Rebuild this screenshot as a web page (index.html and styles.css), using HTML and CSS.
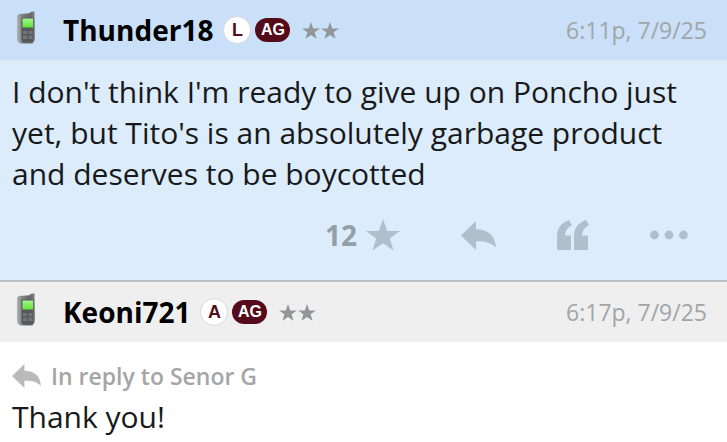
FILE: index.html
```html
<!DOCTYPE html>
<html lang="en">
<head>
<meta charset="utf-8">
<meta name="viewport" content="width=device-width, initial-scale=1">
<title>Forum thread</title>
<link rel="stylesheet" href="styles.css">
</head>
<body>
<svg class="defs" aria-hidden="true">
  <defs>
    <linearGradient id="shell" x1="0" x2="1" y1="0" y2="0">
      <stop offset="0" stop-color="#b0b4b6"/>
      <stop offset=".3" stop-color="#7e8283"/>
      <stop offset=".7" stop-color="#626667"/>
      <stop offset="1" stop-color="#828687"/>
    </linearGradient>
    <linearGradient id="screen" x1="0" x2="0" y1="0" y2="1">
      <stop offset="0" stop-color="#a5f58c"/>
      <stop offset="1" stop-color="#62e23c"/>
    </linearGradient>
    <symbol id="phone" viewBox="0 0 20 34">
      <path fill="url(#shell)" d="M1 5.500 Q1 3.500 3 3 L13.500 2.200 L14.500 1 Q16.500 0 18.500 .6 L19 27 Q18.800 31 16.500 32.500 H5 Q1.500 32 1 28 Z"/>
      <path fill="#55595a" d="M5.500 6.500 H17.500 V29 Q17 31.500 15 31.500 H7.500 Q5.500 31 5.500 29 Z"/>
      <rect x="6.500" y="7.500" width="10.500" height="9" fill="url(#screen)"/>
      <path fill="#727677" d="M7 20 H11 V23 H7 Z M12.500 20 H16.500 V23 H12.500 Z M7 24.500 H11 V28 H7 Z M12.500 24.500 H16.500 V28 H12.500 Z"/>
    </symbol>
    <symbol id="star" viewBox="0 0 34 32">
      <path d="M17 0 L21.200 12 H34 L23.800 19.500 L27.500 31.500 L17 24.300 L6.500 31.500 L10.200 19.500 L0 12 H12.800 Z"/>
    </symbol>
    <symbol id="reply" viewBox="0 0 35 29">
      <path d="M0 14.500 L15 0 V8.200 C27 8.500 34 14 35 26.500 C29 21 23.500 20.300 15 20.300 V29 Z"/>
    </symbol>
    <symbol id="quote" viewBox="0 0 32 30">
      <path d="M12 0 L15 5.200 C10.500 7.500 8.300 10.500 8 15.500 H14 V30 H0 V16 C0 8 4 3 12 0 Z M29 0 L32 5.200 C27.500 7.500 25.300 10.500 25 15.500 H31 V30 H17 V16 C17 8 21 3 29 0 Z"/>
    </symbol>
    <symbol id="more" viewBox="0 0 38 10">
      <circle cx="4.500" cy="5" r="4.400"/><circle cx="19" cy="5" r="4.400"/><circle cx="33.500" cy="5" r="4.400"/>
    </symbol>
  </defs>
</svg>
<main class="thread">
  <article class="post post-active">
    <header class="post-head">
      <svg class="phone" role="img" aria-label="Posted from mobile"><use href="#phone"/></svg>
      <a class="name" href="#">Thunder18</a>
      <span class="badge badge-round">L</span>
      <span class="badge badge-school">AG</span>
      <span class="rank"><svg><use href="#star"/></svg><svg><use href="#star"/></svg></span>
      <time class="time">6:11p, 7/9/25</time>
    </header>
    <p class="message">I don't think I'm ready to give up on Poncho just yet, but Tito's is an absolutely garbage product and deserves to be boycotted</p>
    <footer class="actions">
      <button class="action like" type="button" aria-label="Star, 12"><span class="count">12</span><svg class="icon-star"><use href="#star"/></svg></button>
      <button class="action" type="button" aria-label="Reply"><svg class="icon-reply"><use href="#reply"/></svg></button>
      <button class="action" type="button" aria-label="Quote"><svg class="icon-quote"><use href="#quote"/></svg></button>
      <button class="action" type="button" aria-label="More"><svg class="icon-more"><use href="#more"/></svg></button>
    </footer>
  </article>
  <article class="post">
    <header class="post-head">
      <svg class="phone" role="img" aria-label="Posted from mobile"><use href="#phone"/></svg>
      <a class="name" href="#">Keoni721</a>
      <span class="badge badge-round">A</span>
      <span class="badge badge-school">AG</span>
      <span class="rank"><svg><use href="#star"/></svg><svg><use href="#star"/></svg></span>
      <time class="time">6:17p, 7/9/25</time>
    </header>
    <a class="in-reply" href="#"><svg><use href="#reply"/></svg>In reply to Senor G</a>
    <p class="message message-reply">Thank you!</p>
  </article>
</main>
</body>
</html>
```

FILE: styles.css
```css
* {
  box-sizing: border-box;
}

body {
  margin: 0;
  background: #fff;
  color: #17191b;
  font-family: "Open Sans", sans-serif;
}

a {
  color: inherit;
  text-decoration: none;
}

svg {
  display: block;
  fill: currentColor;
}

.defs {
  position: absolute;
  width: 0;
  height: 0;
}

.post-head {
  display: flex;
  align-items: center;
  height: 60px;
  padding: 0 20px 0 16px;
  background: #efefef;
}

.post-active {
  background: #dcecfb;
  border-bottom: 2px solid #b9c1c7;
}

.post-active .post-head {
  background: #cadff8;
}

.phone {
  width: 20px;
  height: 34px;
  margin: 0 27px 4px 0;
}

.name {
  margin-right: 10px;
  color: #000;
  font-size: 28px;
  font-weight: 700;
}

.badge {
  display: flex;
  align-items: center;
  justify-content: center;
  height: 24px;
  font-family: "Liberation Sans", Arial, sans-serif;
  font-size: 18px;
  font-weight: 700;
  line-height: 24px;
}

.badge-round {
  width: 28px;
  height: 28px;
  margin-right: 4px;
  border: 1px solid #d6dadf;
  border-radius: 50%;
  background: #fff;
  color: #500f1b;
}

.badge-school {
  width: 35px;
  margin-right: 12px;
  border-radius: 12px;
  background: #550b1a;
  color: #fff;
  font-size: 16px;
}

.rank {
  display: flex;
  gap: 1px;
  color: #929699;
}

.rank svg {
  width: 18px;
  height: 17px;
}

.time {
  margin-left: auto;
  color: #a1a5a8;
  font-size: 23px;
}

.message {
  margin: 0;
  padding: 11px 12px 0;
  font-size: 30px;
  line-height: 41px;
}

.actions {
  display: flex;
  align-items: center;
  justify-content: flex-end;
  gap: 61px;
  height: 86px;
  padding: 0 39px 4px 0;
  color: #b0bfcb;
}

.action {
  display: flex;
  align-items: center;
  padding: 0;
  border: 0;
  background: none;
  color: inherit;
  font: inherit;
}

.like {
  gap: 9px;
}

.count {
  color: #929fa9;
  font-size: 28px;
  font-weight: 700;
}

.icon-star {
  width: 34px;
  height: 32px;
}

.icon-reply {
  width: 35px;
  height: 29px;
}

.icon-quote {
  width: 32px;
  height: 30px;
}

.icon-more {
  width: 38px;
  height: 10px;
}

.in-reply {
  display: flex;
  align-items: center;
  gap: 10px;
  padding: 18px 12px 0;
  color: #a5a5a5;
  font-size: 23px;
  font-weight: 600;
  line-height: 32px;
}

.in-reply svg {
  width: 29px;
  height: 24px;
  color: #bababa;
}

.message-reply {
  padding-top: 4px;
}
```
